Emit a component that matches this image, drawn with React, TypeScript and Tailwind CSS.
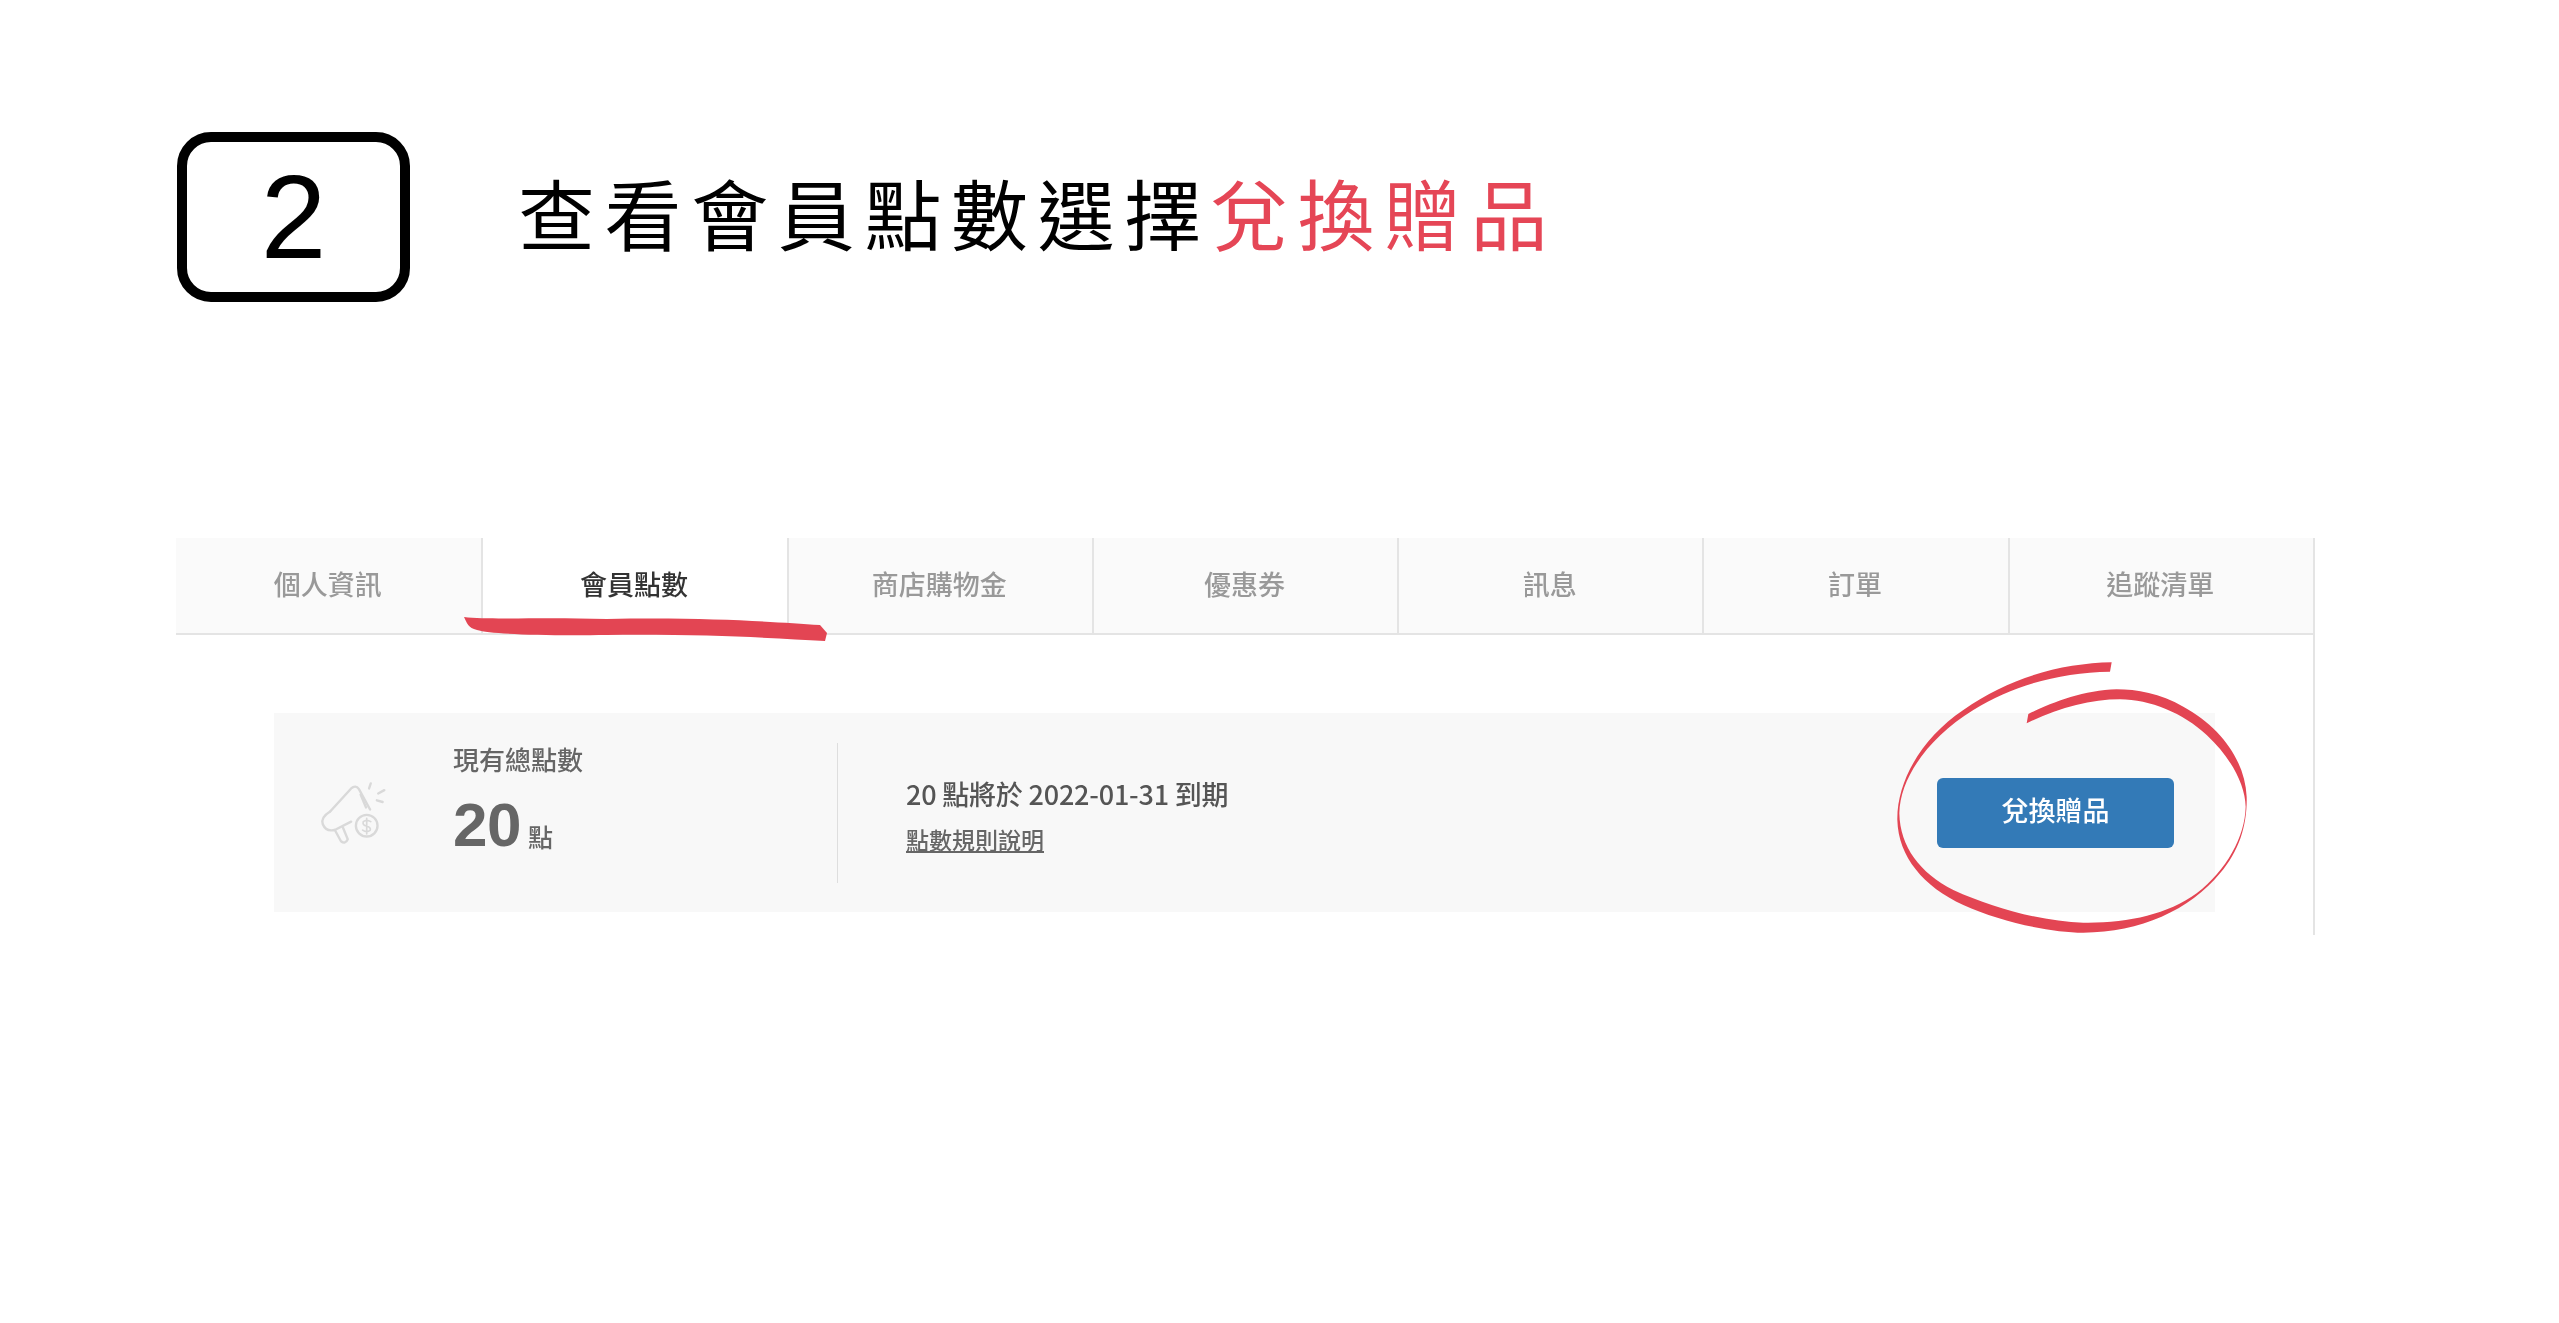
const tabs = ["個人資訊", "會員點數", "商店購物金", "優惠券", "訊息", "訂單", "追蹤清單"];

const cjk = "font-['Liberation_Sans','Noto_Sans_CJK_TC',sans-serif]";

function MegaphoneIcon() {
  return (
    <svg viewBox="115 175 205 195" className="w-[70px] h-[66px] shrink-0" fill="none" stroke="#d9d9d9" strokeWidth="7" strokeLinecap="round" strokeLinejoin="round">
      <path d="M150 268 L212 200 Q225 188 235 202 L268 262" />
      <path d="M150 268 Q122 285 128 305 Q138 330 165 322 L212 298" />
      <path d="M165 325 L182 356 Q195 366 202 350 L188 316" />
      <path d="M240 218 L256 256" />
      <path d="M270 185 L265 200 M310 205 L292 215 M305 240 L288 235" />
      <circle cx="258" cy="310" r="32" />
      <path d="M270 298 Q258 290 248 298 Q244 308 258 311 Q272 316 268 324 Q258 332 246 323 M258 288 L258 334" strokeWidth="5" />
    </svg>
  );
}

export default function App() {
  return (
    <div className={`relative w-[2559px] h-[1323px] bg-white overflow-hidden ${cjk}`}>
      <div className="flex items-center gap-[108px] pt-[132px] pl-[177px]">
        <div className="w-[233px] h-[170px] border-[10px] border-black rounded-[34px] flex items-center justify-center">
          <span className="text-[118px] leading-none text-black font-['Liberation_Sans',sans-serif]">2</span>
        </div>
        <h1 className="text-[77px] leading-none tracking-[9.6px] font-normal text-black pt-[3px]">
          查看會員點數選擇<span className="text-[#e54656]">兌換贈品</span>
        </h1>
      </div>

      <div className="ml-[176px] mt-[236px] w-[2139px] h-[397px] border-r-2 border-[#e4e4e4] blur-[0.5px]">
        <div className="grid grid-cols-7 h-[97px] border-b-2 border-[#e4e4e4]">
          {tabs.map((t, i) => (
            <div
              key={t}
              className={`flex items-center justify-center pt-[1px] pr-[2px] text-[27px] font-medium ${i > 0 ? "border-l-2 border-[#e4e4e4]" : ""} ${i === 1 ? "bg-white text-[#333]" : "bg-[#fafafa] text-[#999]"}`}
            >
              {t}
            </div>
          ))}
        </div>

        <div className="ml-[98px] mt-[78px] w-[1941px] h-[199px] bg-[#f8f8f8] flex items-center text-[#666]">
          <div className="w-[563px] flex items-center pl-[44px]">
            <MegaphoneIcon />
            <div className="ml-[65px] -mt-[25px]">
              <div className="text-[26px] leading-[36px] font-medium">現有總點數</div>
              <div className="flex items-end mt-[13px]">
                <span className="text-[62px] leading-[66px] font-bold tracking-[-0.5px]">20</span>
                <span className="text-[25px] leading-[36px] ml-[7px] mb-[2px] font-medium">點</span>
              </div>
            </div>
          </div>
          <div className="w-px h-[140px] bg-[#dedede]" />
          <div className="ml-[68px] mt-[9px]">
            <div className="text-[27px] leading-[36px] text-[#555] font-medium font-['Noto_Sans_CJK_TC',sans-serif] tracking-[-0.2px]">20 點將於 2022-01-31 到期</div>
            <a className="block mt-[11px] text-[23px] leading-[36px] underline text-[#666] font-medium">點數規則說明</a>
          </div>
          <button className="ml-auto mr-[41px] w-[237px] h-[70px] rounded-[6px] bg-[#337ab7] text-white text-[27px] font-medium">
            兌換贈品
          </button>
        </div>
      </div>

      {/* red marker scribbles on top of the page */}
      <svg viewBox="0 0 420 130" className="absolute left-[440px] top-[530px] w-[420px] h-[130px]" fill="#e34553">
        <path d="M24 87 C50 90 100 87 167 89 C267 87 333 92 380 95 L387 103 L385 111 C333 108 267 104 167 105 C100 106 50 104 37 100 C28 98 27 93 24 87Z" />
      </svg>
      <svg viewBox="0 0 1560 1320" className="absolute left-[1850px] top-[520px] w-[520px] h-[440px]" fill="#e34553">
        <path d="M785 427 C640 430 480 470 340 570 C220 650 140 780 142 900 C145 1010 220 1100 340 1155 C450 1205 600 1238 700 1238 C870 1238 1020 1170 1110 1060 C1170 990 1192 910 1190 830 C1185 720 1110 620 1000 560 C930 520 860 508 800 508 C700 510 600 550 535 582 L530 610 C620 565 720 538 810 538 C900 538 1000 580 1070 645 C1140 710 1185 790 1187 860 C1185 950 1130 1050 1040 1120 C950 1185 830 1210 700 1208 C580 1205 430 1165 310 1110 C210 1060 150 980 148 880 C150 770 240 650 370 570 C490 495 630 458 780 455 Z" />
      </svg>
    </div>
  );
}
